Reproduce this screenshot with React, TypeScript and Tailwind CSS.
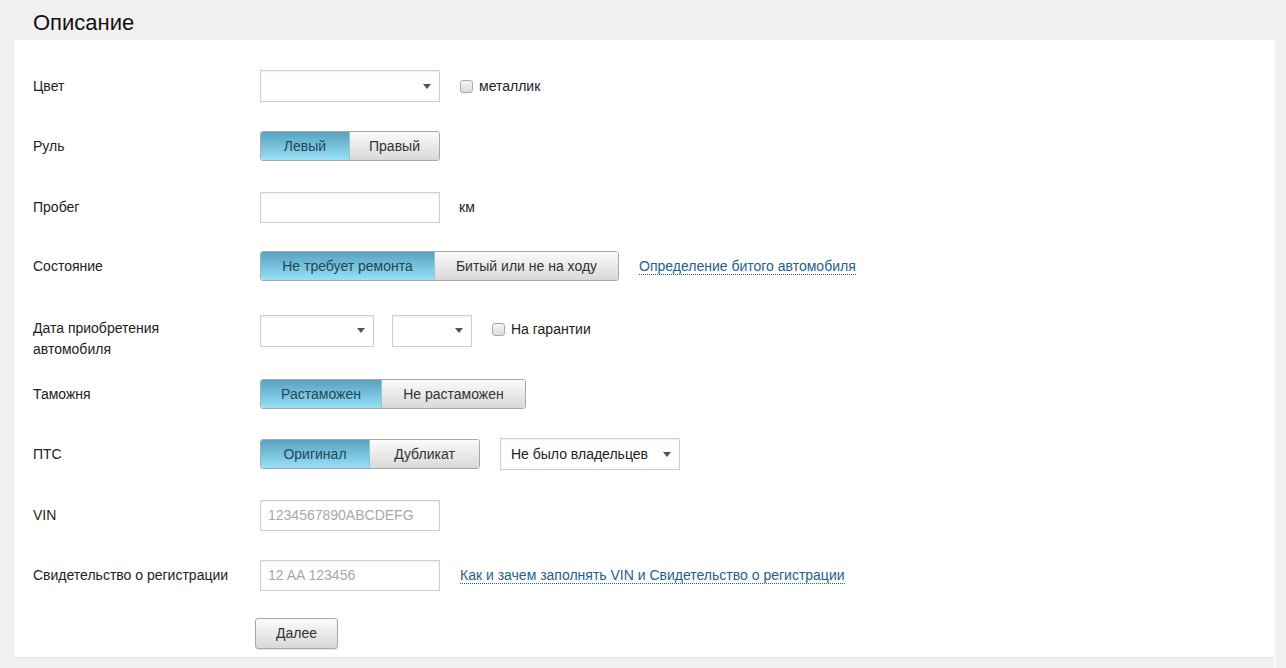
import React from 'react';

const font = { fontFamily: '"Liberation Sans", Arial, sans-serif' };

function Caret() {
  return <span className="w-0 h-0 border-l-[4px] border-r-[4px] border-t-[5px] border-l-transparent border-r-transparent border-t-[#555]" />;
}

function Select({ w, text }: { w: string; text?: string }) {
  return (
    <div className={`${w} h-[32px] bg-white border border-[#d0d0d0] shadow-[inset_0_1px_2px_rgba(0,0,0,0.08)] flex items-center justify-between pl-[10px] pr-[8px] text-[14px] text-[#222]`}>
      <span>{text}</span>
      <Caret />
    </div>
  );
}

function Input({ placeholder }: { placeholder?: string }) {
  return (
    <div className="w-[180px] h-[31px] bg-white border border-[#d0d0d0] shadow-[inset_0_1px_2px_rgba(0,0,0,0.08)] flex items-center px-[7px] text-[14px] text-[#a8a8a8]">
      {placeholder}
    </div>
  );
}

function Check({ label }: { label: string }) {
  return (
    <label className="flex items-center gap-[6px] text-[14px] text-[#222]">
      <span className="w-[13px] h-[13px] rounded-[3px] border border-[#a9a9a9] bg-gradient-to-b from-[#f4f4f4] to-[#dedede]" />
      {label}
    </label>
  );
}

function Toggle({ items }: { items: { label: string; w: string }[] }) {
  return (
    <div className="flex h-[30px] rounded-[3px] overflow-hidden border border-[#a9a9a9] text-[14px]">
      {items.map((it, i) => (
        <div
          key={it.label}
          className={`${it.w} flex items-center justify-center ${
            i === 0
              ? 'bg-gradient-to-b from-[#57a2c1] to-[#98e1f6] text-[#23465a] border-r border-[#8cc7dc]'
              : 'bg-gradient-to-b from-[#fbfbfb] to-[#d9d9d9] text-[#333]'
          }`}
        >
          {it.label}
        </div>
      ))}
    </div>
  );
}

function Link({ children }: { children: React.ReactNode }) {
  return (
    <a className="text-[14px] text-[#245f8e] border-b border-dotted border-[#245f8e] leading-[17px] cursor-pointer">
      {children}
    </a>
  );
}

function Row({ label, children, className = '' }: { label: React.ReactNode; children: React.ReactNode; className?: string }) {
  return (
    <div className={`flex items-center h-[32px] ${className}`}>
      <div className="w-[227px] shrink-0 text-[14px] text-[#222]">{label}</div>
      <div className="flex items-center">{children}</div>
    </div>
  );
}

export default function App() {
  return (
    <div className="w-[1286px] h-[668px] bg-[#f1f1f1] overflow-hidden flex flex-col" style={font}>
      <div className="h-[40px] shrink-0 pl-[33px] pt-[4px] flex items-center text-[22px] text-[#111] mr-[12px]">Описание</div>
      <div className="flex flex-1 min-h-0">
        <div className="w-[14px] shrink-0" />
        <div className="w-[1260px] h-[618px] bg-white border-b border-[#e2e2e2] pl-[19px] flex flex-col">
          <Row label="Цвет" className="mt-[30px]">
            <Select w="w-[180px]" />
            <div className="ml-[20px]"><Check label="металлик" /></div>
          </Row>
          <Row label="Руль" className="mt-[28px]">
            <Toggle items={[{ label: 'Левый', w: 'w-[89px]' }, { label: 'Правый', w: 'w-[89px]' }]} />
          </Row>
          <Row label="Пробег" className="mt-[29px]">
            <Input />
            <span className="ml-[19px] text-[14px] text-[#222]">км</span>
          </Row>
          <Row label="Состояние" className="mt-[27px]">
            <Toggle items={[{ label: 'Не требует ремонта', w: 'w-[174px]' }, { label: 'Битый или не на ходу', w: 'w-[183px]' }]} />
            <div className="ml-[20px]"><Link>Определение битого автомобиля</Link></div>
          </Row>
          <div className="flex items-start mt-[33px]">
            <div className="w-[227px] shrink-0 pt-[3px] text-[14px] leading-[21px] text-[#222]">Дата приобретения<br />автомобиля</div>
            <div className="flex items-center h-[31px]">
              <Select w="w-[114px]" />
              <div className="ml-[18px]"><Select w="w-[80px]" /></div>
              <div className="ml-[20px] -mt-[2px]"><Check label="На гарантии" /></div>
            </div>
          </div>
          <Row label="Таможня" className="mt-[18px]">
            <Toggle items={[{ label: 'Растаможен', w: 'w-[121px]' }, { label: 'Не растаможен', w: 'w-[143px]' }]} />
          </Row>
          <Row label="ПТС" className="mt-[28px]">
            <Toggle items={[{ label: 'Оригинал', w: 'w-[109px]' }, { label: 'Дубликат', w: 'w-[109px]' }]} />
            <div className="ml-[20px]"><Select w="w-[180px]" text="Не было владельцев" /></div>
          </Row>
          <Row label="VIN" className="mt-[29px]">
            <Input placeholder="1234567890ABCDEFG" />
          </Row>
          <Row label="Свидетельство о регистрации" className="mt-[28px]">
            <Input placeholder="12 AA 123456" />
            <div className="ml-[20px]"><Link>Как и зачем заполнять VIN и Свидетельство о регистрации</Link></div>
          </Row>
          <div className="mt-[27px] pl-[222px]">
            <button className="w-[83px] h-[31px] rounded-[3px] border border-[#a9a9a9] bg-gradient-to-b from-[#fbfbfb] to-[#d9d9d9] text-[14px] text-[#333] shadow-[0_1px_1px_rgba(0,0,0,0.1)]">
              Далее
            </button>
          </div>
        </div>
        <div className="w-[1px] bg-white shrink-0" />
      </div>
    </div>
  );
}
